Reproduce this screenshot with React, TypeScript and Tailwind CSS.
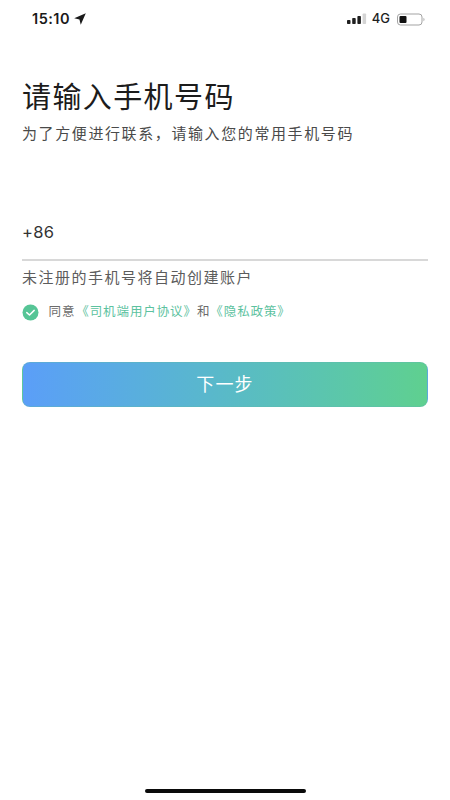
const CJK = 'font-["Inter","Noto_Sans_CJK_SC",sans-serif]';

function StatusBar() {
  return (
    <div className="flex h-[38px] items-center justify-between pl-[32px] pr-[24px]">
      <div className="flex items-center gap-[4px]">
        <span className="text-[14.5px] font-semibold tracking-[0.5px] text-[#1a1a1a]">15:10</span>
        <svg width="12" height="12" viewBox="0 0 11 11">
          <path d="M10.8 0.2 L0.2 4.8 L5 6 L6.2 10.8 Z" fill="#1a1a1a" />
        </svg>
      </div>
      <div className="flex items-center">
        <svg width="21" height="12" viewBox="0 0 21 12">
          <rect x="0" y="7" width="3.5" height="4" rx="0.8" fill="#1f1f1f" />
          <rect x="5.2" y="5" width="3.5" height="6" rx="0.8" fill="#1f1f1f" />
          <rect x="10.4" y="3" width="3.5" height="8" rx="0.8" fill="#1f1f1f" />
          <rect x="15.6" y="0.5" width="3.5" height="10.5" rx="0.8" fill="#d4d4d4" />
        </svg>
        <span className="ml-[4px] text-[13px] font-medium text-[#1f1f1f]">4G</span>
        <svg className="ml-[7px]" width="29" height="13" viewBox="0 0 29 13">
          <rect x="0.5" y="1" width="24.5" height="11" rx="3" fill="none" stroke="#a3a3a3" strokeWidth="1" />
          <rect x="2.5" y="3" width="7" height="7" rx="1" fill="#111111" />
          <path d="M26.5 4.8 C27.8 5.2 27.8 7.8 26.5 8.2 Z" fill="#a3a3a3" />
        </svg>
      </div>
    </div>
  );
}

export default function App() {
  return (
    <div className={`flex min-h-[800px] w-[450px] flex-col bg-white ${CJK}`}>
      <StatusBar />

      <div className="flex flex-col px-[22px]">
        {/* Header */}
        <h1 className="mt-[40px] text-[29px] leading-[40px] font-normal tracking-[1.4px] text-[#1c1c1c]">
          请输入手机号码
        </h1>
        <p className="mt-[6px] text-[15px] leading-[20px] tracking-[1.6px] text-[#4a4a4a]">
          为了方便进行联系，请输入您的常用手机号码
        </p>

        {/* Phone input */}
        <div className="mt-[76px] border-b-2 border-[#d8d8d8] pb-[15px] text-[16.5px] leading-[24px] tracking-[0.3px] text-[#333333]">
          +86
        </div>
        <p className="mt-[7px] text-[15px] leading-[20px] tracking-[1.5px] text-[#5c5c5c]">
          未注册的手机号将自动创建账户
        </p>

        {/* Agreement */}
        <div className="mt-[15px] flex h-[18px] items-center text-[12.5px] tracking-[0.9px]">
          <svg className="-ml-[0.5px]" width="17" height="17" viewBox="0 0 17 17">
            <circle cx="8.5" cy="8.5" r="8" fill="#56c596" />
            <path d="M4.8 8.6 L7.5 11 L12.2 6.4" fill="none" stroke="#ffffff" strokeWidth="1.5" strokeLinecap="round" strokeLinejoin="round" />
          </svg>
          <span className="ml-[10px] text-[#6b6b6b]">同意</span>
          <span className="ml-[1px] text-[#5cc2a0]">《司机端用户协议》</span>
          <span className="text-[#6b6b6b]">和</span>
          <span className="text-[#5cc2a0]">《隐私政策》</span>
        </div>

        {/* Next button */}
        <button className="mt-[41px] h-[45px] rounded-[8px] border border-[#5fb8b0]/40 bg-gradient-to-r from-[#5b9ef8] to-[#5fd08f] text-[18px] tracking-[1.2px] text-white">
          下一步
        </button>
      </div>

      {/* Home indicator */}
      <div className="mt-auto mb-[7px] h-[4px] w-[161px] self-center rounded-full bg-[#0a0a0a]" />
    </div>
  );
}
